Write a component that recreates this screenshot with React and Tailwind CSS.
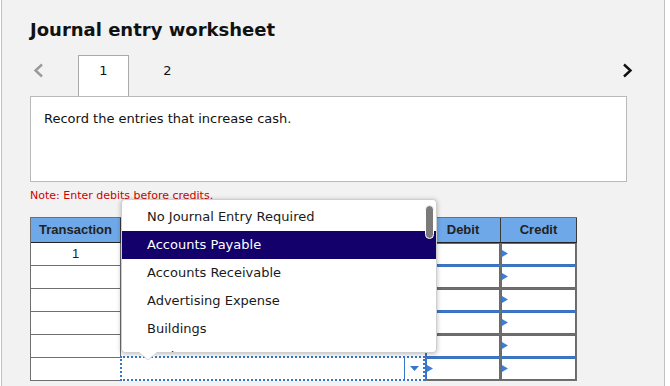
import React from 'react';

const verdana = { fontFamily: '"DejaVu Sans", Verdana, sans-serif' };

const accounts = [
  'No Journal Entry Required',
  'Accounts Payable',
  'Accounts Receivable',
  'Advertising Expense',
  'Buildings',
  'Cash',
];

const Marker = () => (
  <svg className="absolute left-[1px] top-[7px]" width="6" height="7" viewBox="0 0 6 7">
    <polygon points="0,0 6,3.5 0,7" fill="#3d7fd6" />
  </svg>
);

const AmountCell = () => (
  <div className="relative h-[23px] border-r border-b border-[#6f6f6f] bg-white">
    <div className="absolute inset-0 border border-[#3a72c2]" />
    <Marker />
  </div>
);

const App = () => {
  const rows = [1, 2, 3, 4, 5, 6];

  return (
    <div className="relative h-[386px] w-[670px] overflow-hidden bg-white" style={verdana}>
      <div className="ml-[1px] h-[386px] w-[664px] border-x border-[#c2c2c2] bg-[#f2f2f2] pl-[28px] pt-[19px]">
        {/* Title */}
        <h1 className="h-[22px] text-[18px] font-bold leading-[22px] text-[#111]">Journal entry worksheet</h1>

        {/* Tabs */}
        <div className="mt-[14px] flex w-[604px] items-start">
          <div className="w-[48px] pl-[3px] pt-[8px]">
            <svg width="11" height="15" viewBox="0 0 11 15">
              <path d="M9 1.5 L2.5 7.5 L9 13.5" fill="none" stroke="#9a9a9a" strokeWidth="2.4" />
            </svg>
          </div>
          <div className="relative z-10 -mb-px h-[41px] w-[51px] border border-b-0 border-[#a9a9a9] bg-white pt-[7px] text-center text-[13px] leading-[16px] text-[#111]">
            1
          </div>
          <div className="ml-[13px] h-[41px] w-[51px] pt-[8px] text-center text-[13px] leading-[16px] text-[#111]">2</div>
          <div className="ml-auto pr-[1px] pt-[8px]">
            <svg width="11" height="15" viewBox="0 0 11 15">
              <path d="M2 1.5 L8.5 7.5 L2 13.5" fill="none" stroke="#111" strokeWidth="2.4" />
            </svg>
          </div>
        </div>

        {/* Instructions */}
        <div className="h-[86px] w-[597px] border border-[#b9b9b9] bg-white pl-[13px] pt-[14px] text-[13px] leading-[16px] text-[#111]">
          Record the entries that increase cash.
        </div>

        <p className="mt-[7px] text-[11px] leading-[14px] text-[#cc0000]">Note: Enter debits before credits.</p>

        {/* Journal table (account header sits under the open list) */}
        <div
          className="mt-[14px] grid w-[547px] grid-cols-[90px_305px_75px_76px] border-l border-t border-[#6f6f6f]"
          style={{ fontFamily: '"Liberation Sans", Arial, sans-serif' }}
        >
          {['Transaction', '', 'Debit', 'Credit'].map((h, i) => (
            <div
              key={i}
              className="flex h-[25px] items-center justify-center border-r border-b border-r-[#3a3a3a] border-b-[#222] bg-[#6fa8e9] text-[13px] font-bold text-[#222]"
            >
              {h}
            </div>
          ))}
          {rows.map((r) => (
            <React.Fragment key={r}>
              <div className="flex h-[23px] items-center justify-center border-r border-b border-[#6f6f6f] bg-white text-[13px] text-[#222]">
                {r === 1 ? '1' : ''}
              </div>
              <div className="relative h-[23px] border-r border-b border-[#6f6f6f] bg-white">
                {r === 6 && (
                  <div className="absolute -top-[2px] -left-[1px] -bottom-[1px] right-0 flex border-2 border-dotted border-[#3875c9] bg-white">
                    <div className="flex-1" />
                    <div className="flex w-[19px] items-center justify-center border-l border-[#3875c9]">
                      <svg width="9" height="5" viewBox="0 0 9 5">
                        <polygon points="0,0 9,0 4.5,5" fill="#3875c9" />
                      </svg>
                    </div>
                  </div>
                )}
              </div>
              <AmountCell />
              <AmountCell />
            </React.Fragment>
          ))}
        </div>
      </div>

      {/* Open account dropdown */}
      <div className="absolute left-[121px] top-[199px] h-[154px] w-[316px] overflow-hidden rounded-[4px] border border-[#cfcfcf] bg-white pt-[3px] shadow-[0_1px_5px_rgba(0,0,0,0.28)]">
        {accounts.map((a, i) => (
          <div
            key={a}
            className={`flex h-[28px] items-center pl-[25px] text-[13px] ${
              i === 1 ? 'bg-[#13006b] text-white' : 'text-[#1a1a1a]'
            }`}
          >
            {a}
          </div>
        ))}
        <div className="absolute right-[2px] top-[5px] h-[34px] w-[9px] rounded-full border border-white bg-[#7a7a7a]" />
      </div>
      <svg className="absolute left-[139px] top-[352px]" width="18" height="9" viewBox="0 0 18 9">
        <polygon points="0,0 18,0 9,8" fill="white" />
        <polyline points="0,0.5 9,8 18,0.5" fill="none" stroke="#d6d6d6" strokeWidth="1" />
      </svg>
    </div>
  );
};

export default App;
